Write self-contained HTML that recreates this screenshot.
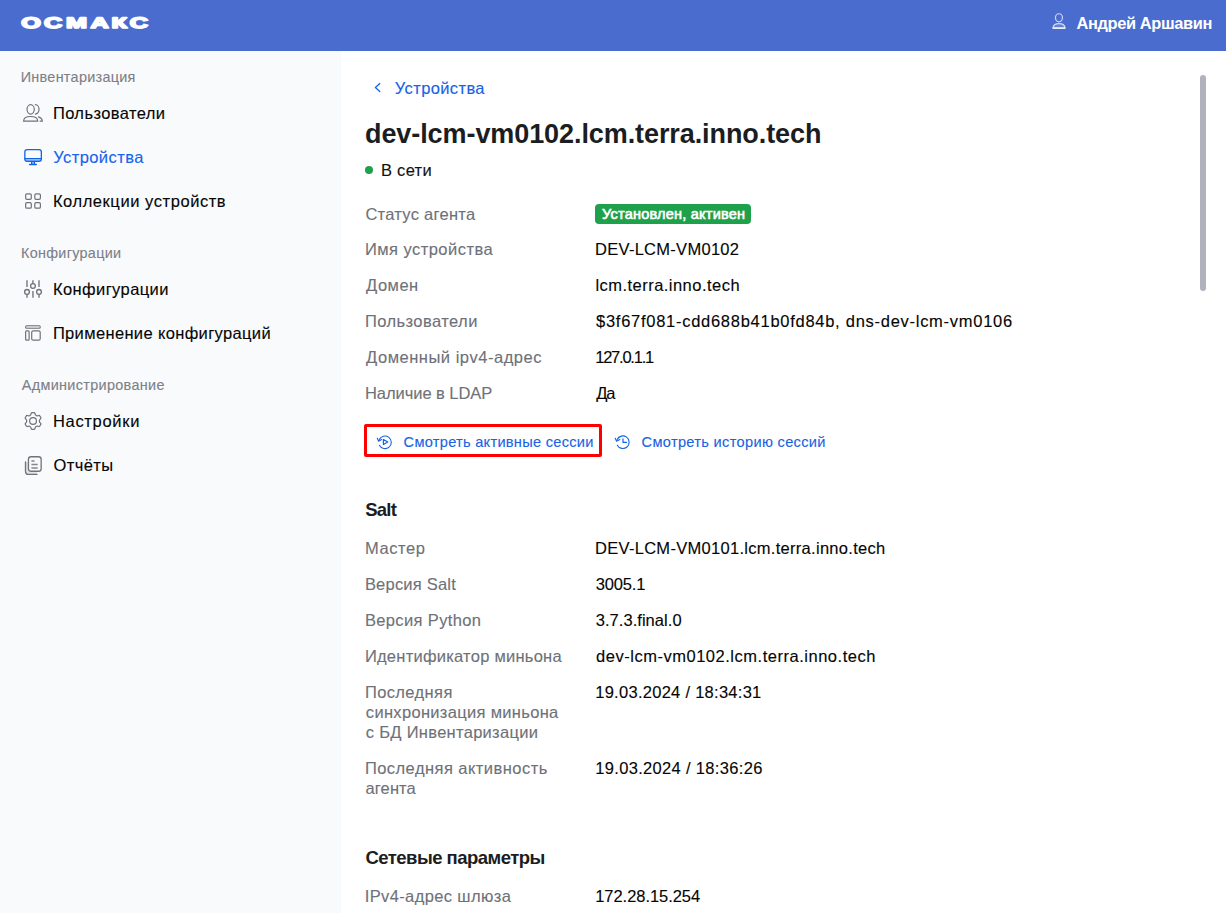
<!DOCTYPE html>
<html lang="ru">
<head>
<meta charset="utf-8">
<title>ОСМАКС — Устройства</title>
<style>
*{box-sizing:border-box;margin:0;padding:0}
a{text-decoration:none;cursor:pointer}
h1,h2,dt,dd{font-weight:400}
html,body{width:1226px;height:913px;overflow:hidden;background:#fff}
body{font-family:"Liberation Sans",sans-serif;color:#111;position:relative}
.hdr{position:absolute;left:0;top:0;width:1226px;height:51px;background:#4a6ccf}
.side{position:absolute;left:0;top:51px;width:341px;height:862px;background:#f9fafc}
.main{position:absolute;left:341px;top:51px;width:885px;height:862px;background:#fff}
.t{position:absolute;white-space:nowrap;line-height:20px;font-size:16.5px;-webkit-text-stroke:0.12px currentColor}
.user,.h1{-webkit-text-stroke:0}
.sec{font-size:14.4px;line-height:18px;color:#7d8088}
.it{color:#050505}
.it.act{color:#1763ee}
.user{color:#fff;font-weight:700;font-size:16.4px}
.back{color:#1862e4}
.h1{font-size:27px;line-height:34px;font-weight:700;color:#1b1d22}
.net{color:#111}
.l{color:#6e7178}
.v{color:#050505}
.bt{color:#fff;font-weight:400;font-size:14.5px;-webkit-text-stroke:0.6px #fff}
.btn{font-size:14.6px;color:#1862e4}
.h2{font-size:18.5px;line-height:24px;font-weight:700;color:#1b1d22;-webkit-text-stroke:0}
.sb{position:absolute;left:859px;top:24px;width:6px;height:216px;border-radius:3px;background:#b0b3bc}
.dot{position:absolute;left:24px;top:115px;width:8px;height:8px;border-radius:50%;background:#1fa04b}
.badge{position:absolute;left:254px;top:153px;height:20px;width:156px;border-radius:4px;background:#1fa04b}
.hl{position:absolute;left:23px;top:373px;width:238px;height:33px;border:3px solid #f00;border-radius:2px}
.logo{position:absolute;left:0;top:0;width:160px;height:40px}
.ov{position:absolute;left:0;top:0}
.ic{position:absolute}
</style>
</head>
<body>
<header class="hdr">
<svg class="logo" width="160" height="40" viewBox="0 0 160 40"><text transform="scale(1.66 1)" x="12.80 26.53 39.74 54.57 67.17 78.24" y="28.3" fill="#fff" stroke="#fff" stroke-width="1.6" stroke-linejoin="round" font-family="Liberation Sans, sans-serif" font-weight="700" font-size="15.2" text-rendering="geometricPrecision">ОСМАКС</text></svg>
<svg class="ov" width="1226" height="51" viewBox="0 0 1226 51" fill="none" stroke-linecap="round" stroke-linejoin="round" aria-hidden="true">
<g stroke="#fff" stroke-opacity="0.72" stroke-width="1.2">
<ellipse cx="1058.95" cy="17.8" rx="3.5" ry="4.05"/>
<path d="M1053.1 28.1H1064.9C1064.9 25.2 1062.4 23.6 1059 23.6C1055.6 23.6 1053.1 25.2 1053.1 28.1Z" fill="#fff" fill-opacity="0.15"/>
<path d="M1053.1 28.1H1064.9" stroke-width="1.6"/>
</g>
</svg>
<span id="u" class="t user" style="left:1076.49px;top:13px;letter-spacing:-0.360px">Андрей Аршавин</span>
</header>
<aside class="side">
<nav>
<div id="s1" class="t sec" style="left:20.68px;top:17px;letter-spacing:0.295px">Инвентаризация</div>
<a id="i1" class="t it" style="left:52.88px;top:52px;letter-spacing:0.409px">Пользователи</a>
<a id="i2" class="t it act" style="left:53.18px;top:96px;letter-spacing:0.427px">Устройства</a>
<a id="i3" class="t it" style="left:52.90px;top:140px;letter-spacing:0.566px">Коллекции устройств</a>
<div id="s2" class="t sec" style="left:21.01px;top:193px;letter-spacing:0.297px">Конфигурации</div>
<a id="i4" class="t it" style="left:52.90px;top:228px;letter-spacing:0.415px">Конфигурации</a>
<a id="i5" class="t it" style="left:52.88px;top:272px;letter-spacing:0.353px">Применение конфигураций</a>
<div id="s3" class="t sec" style="left:21.82px;top:325px;letter-spacing:0.336px">Администрирование</div>
<a id="i6" class="t it" style="left:52.90px;top:360px;letter-spacing:0.700px">Настройки</a>
<a id="i7" class="t it" style="left:53.47px;top:404px;letter-spacing:0.433px">Отчёты</a>
</nav>
<svg class="ov" width="341" height="862" viewBox="0 51 341 862" fill="none" stroke-linecap="round" stroke-linejoin="round" aria-hidden="true">
<g stroke="#6f727b" stroke-width="1.2">
<ellipse cx="30.65" cy="109.35" rx="3.65" ry="4.75"/>
<path d="M35.4 104.6A3.65 4.75 0 0 1 35.4 114.1"/>
<path d="M23.6 121.2H37.7C37.7 118 34.5 116.5 30.65 116.5C26.8 116.5 23.6 118 23.6 121.2Z"/>
<path d="M38.4 116.9C40.6 117.6 42.3 119 42.3 121.2H40.1"/>
</g>
<g stroke="#1264e8" stroke-width="1.3">
<path d="M24.85 158.6H41.35V159.3Q41.35 161.25 39.2 161.25H27Q24.85 161.25 24.85 159.3Z" fill="#1264e8" fill-opacity="0.22" stroke="none"/>
<rect x="24.85" y="149.55" width="16.5" height="11.7" rx="2.3"/>
<path d="M24.85 158.6H41.35"/>
<path d="M31.7 161.4V164.4M34.4 161.4V164.4M29.6 164.5H36.4"/>
<path d="M31.7 161.4H34.4V164.4H31.7Z" fill="#1264e8" fill-opacity="0.3" stroke="none"/>
</g>
<g stroke="#6f727b" stroke-width="1.2">
<rect x="25.65" y="193.8" width="5.65" height="5.5" rx="1.3"/>
<rect x="34.8" y="193.8" width="5.6" height="5.5" rx="1.3"/>
<rect x="25.65" y="202.7" width="5.65" height="5.5" rx="1.3"/>
<rect x="34.8" y="202.7" width="5.6" height="5.5" rx="1.3"/>
</g>
<g stroke="#6f727b" stroke-width="1.3" stroke-linecap="butt">
<path d="M27 280.2V286.9M27 294.6V297.8M32.95 280.2V283.3M32.95 291V297.8M39 280.2V286.9M39 294.6V297.8" stroke-opacity="0.85" stroke-width="1.6"/>
<circle cx="27" cy="291.9" r="2.4"/>
<circle cx="32.95" cy="286" r="2.4"/>
<circle cx="39" cy="291.9" r="2.4"/>
</g>
<g stroke="#6f727b" stroke-width="1.2">
<rect x="25.6" y="325.75" width="14.65" height="2.5" rx="1" fill="#6f727b" fill-opacity="0.12" stroke-width="1.05"/>
<rect x="25.65" y="330.8" width="3.45" height="9.4" rx="0.9"/>
<rect x="31.7" y="330.8" width="8.5" height="9.4" rx="1.5"/>
</g>
<g stroke="#6f727b" stroke-width="1.2">
<path d="M31.12 413.33Q31.26 412.59 32.41 412.59L33.69 412.59Q34.84 412.59 34.98 413.33L35.13 414.15Q35.27 414.89 35.90 415.25L36.60 415.66Q37.23 416.02 37.94 415.77L38.73 415.49Q39.44 415.25 40.01 416.24L40.66 417.35Q41.23 418.34 40.66 418.83L40.02 419.38Q39.45 419.87 39.45 420.59L39.45 421.41Q39.45 422.13 40.02 422.62L40.66 423.17Q41.23 423.66 40.66 424.65L40.01 425.76Q39.44 426.75 38.73 426.51L37.94 426.23Q37.23 425.98 36.60 426.34L35.90 426.75Q35.27 427.11 35.13 427.85L34.98 428.67Q34.84 429.41 33.69 429.41L32.41 429.41Q31.26 429.41 31.12 428.67L30.97 427.85Q30.83 427.11 30.20 426.75L29.50 426.34Q28.87 425.98 28.16 426.23L27.37 426.51Q26.66 426.75 26.09 425.76L25.44 424.65Q24.87 423.66 25.44 423.17L26.08 422.62Q26.65 422.13 26.65 421.41L26.65 420.59Q26.65 419.87 26.08 419.38L25.44 418.83Q24.87 418.34 25.44 417.35L26.09 416.24Q26.66 415.25 27.37 415.49L28.16 415.77Q28.87 416.02 29.50 415.66L30.20 415.25Q30.83 414.89 30.97 414.15Z"/>
<circle cx="33.05" cy="421" r="3.4"/>
</g>
<g stroke="#6f727b" stroke-width="1.3">
<path d="M25.5 462V471.4Q25.5 474.4 28.5 474.4H37V471.9H28.4V462Z" fill="#6f727b" fill-opacity="0.16" stroke="none"/>
<path d="M25.5 462V471.4Q25.5 474.4 28.5 474.4H37"/>
<rect x="28.45" y="456.75" width="12.7" height="14.5" rx="2.6"/>
<path d="M31.4 460.9H34.6M31.4 464.4H37.7M31.4 467.9H37.7" stroke-width="1.5" stroke-linecap="butt" stroke-opacity="0.85"/>
</g>
</svg>
</aside>
<main class="main">
<svg class="ov" width="885" height="862" viewBox="341 51 885 862" fill="none" stroke-linecap="round" stroke-linejoin="round" aria-hidden="true">
<g stroke="#1264e8" stroke-width="1.3">
<path d="M379.8 83.5L375.4 87.5L379.8 91.5"/>
</g>
<g stroke="#1264e8" stroke-width="1.1">
<path d="M379.3 439.6A6.3 6.3 0 1 1 379.4 445.2"/>
<path d="M377.3 438.2L378.6 441.3L381.6 439.6"/>
<path d="M383.4 439.5V444.5L387.8 442Z" stroke-width="1.2"/>
<path d="M617.1 439.6A6.3 6.3 0 1 1 617.3 445.2"/>
<path d="M615.2 438.2L616.6 441.3L619.8 439.6"/>
<path d="M623 438.8V442.4H626.4" stroke-width="1.2"/>
</g>
</svg>
<div class="dot"></div>
<div class="badge"></div>
<div class="hl"></div>
<a id="bk" class="t back" style="left:53.87px;top:27px;letter-spacing:0.373px">Устройства</a>
<h1 id="h1" class="t h1" style="left:24.04px;top:66px;letter-spacing:-0.085px">dev-lcm-vm0102.lcm.terra.inno.tech</h1>
<span id="net" class="t net" style="left:39.93px;top:109px;letter-spacing:0.288px">В сети</span>
<dl>
<dt id="l1" class="t l" style="left:24.39px;top:153px;letter-spacing:0.276px">Статус агента</dt>
<dd id="bd" class="t bt" style="left:261.04px;top:153px;letter-spacing:0.226px">Установлен, активен</dd>
<dt id="l2" class="t l" style="left:23.90px;top:188px;letter-spacing:0.462px">Имя устройства</dt>
<dd id="v2" class="t v" style="left:254.03px;top:188px;letter-spacing:0.282px">DEV-LCM-VM0102</dd>
<dt id="l3" class="t l" style="left:25.12px;top:224px;letter-spacing:0.468px">Домен</dt>
<dd id="v3" class="t v" style="left:254.38px;top:224px;letter-spacing:0.471px">lcm.terra.inno.tech</dd>
<dt id="l4" class="t l" style="left:23.88px;top:260px;letter-spacing:0.439px">Пользователи</dt>
<dd id="v4" class="t v" style="left:255.03px;top:260px;letter-spacing:0.727px">$3f67f081-cdd688b41b0fd84b, dns-dev-lcm-vm0106</dd>
<dt id="l5" class="t l" style="left:25.12px;top:296px;letter-spacing:0.511px">Доменный ipv4-адрес</dt>
<dd id="v5" class="t v" style="left:254.22px;top:296px;letter-spacing:-1.228px">127.0.1.1</dd>
<dt id="l6" class="t l" style="left:23.90px;top:332px;letter-spacing:-0.044px">Наличие в LDAP</dt>
<dd id="v6" class="t v" style="left:255.35px;top:332px;letter-spacing:-1.361px">Да</dd>
</dl>
<a id="b1" class="t btn" style="left:62.62px;top:381px;letter-spacing:0.275px">Смотреть активные сессии</a>
<a id="b2" class="t btn" style="left:300.62px;top:381px;letter-spacing:0.319px">Смотреть историю сессий</a>
<h2 id="h2a" class="t h2" style="left:24.22px;top:447px;letter-spacing:-0.742px">Salt</h2>
<dl>
<dt id="l7" class="t l" style="left:23.90px;top:487px;letter-spacing:0.584px">Мастер</dt>
<dd id="v7" class="t v" style="left:254.03px;top:487px;letter-spacing:0.291px">DEV-LCM-VM0101.lcm.terra.inno.tech</dd>
<dt id="l8" class="t l" style="left:23.90px;top:523px;letter-spacing:0.210px">Версия Salt</dt>
<dd id="v8" class="t v" style="left:254.68px;top:523px;letter-spacing:-0.133px">3005.1</dd>
<dt id="l9" class="t l" style="left:23.90px;top:559px;letter-spacing:0.364px">Версия Python</dt>
<dd id="v9" class="t v" style="left:254.68px;top:559px;letter-spacing:0.052px">3.7.3.final.0</dd>
<dt id="l10" class="t l" style="left:23.90px;top:595px;letter-spacing:0.248px">Идентификатор миньона</dt>
<dd id="v10" class="t v" style="left:255.07px;top:595px;letter-spacing:0.517px">dev-lcm-vm0102.lcm.terra.inno.tech</dd>
<dt>
<span id="l11a" class="t l" style="left:23.88px;top:631px;letter-spacing:0.394px">Последняя</span>
<span id="l11b" class="t l" style="left:24.84px;top:651px;letter-spacing:0.315px">синхронизация миньона</span>
<span id="l11c" class="t l" style="left:24.84px;top:671px;letter-spacing:0.291px">с БД Инвентаризации</span>
</dt>
<dd id="v11" class="t v" style="left:254.22px;top:631px;letter-spacing:0.275px">19.03.2024 / 18:34:31</dd>
<dt>
<span id="l12a" class="t l" style="left:23.88px;top:707px;letter-spacing:0.455px">Последняя активность</span>
<span id="l12b" class="t l" style="left:24.50px;top:727px;letter-spacing:0.125px">агента</span>
</dt>
<dd id="v12" class="t v" style="left:254.22px;top:707px;letter-spacing:0.329px">19.03.2024 / 18:36:26</dd>
</dl>
<h2 id="h2b" class="t h2" style="left:24.45px;top:795px;letter-spacing:-0.525px">Сетевые параметры</h2>
<dl>
<dt id="l13" class="t l" style="left:23.72px;top:835px;letter-spacing:0.375px">IPv4-адрес шлюза</dt>
<dd id="v13" class="t v" style="left:254.22px;top:835px;letter-spacing:-0.051px">172.28.15.254</dd>
</dl>
<div class="sb"></div>
</main>
</body>
</html>
